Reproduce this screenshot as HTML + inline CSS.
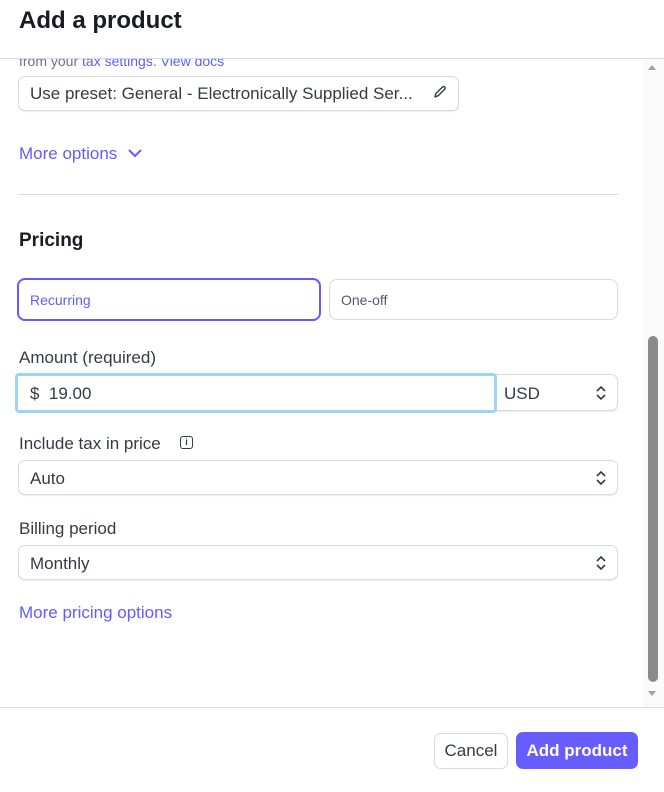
<!DOCTYPE html>
<html><head><style>
*{box-sizing:border-box;margin:0;padding:0}
body{width:664px;height:792px;overflow:hidden;background:#fff;font-family:"Liberation Sans",sans-serif;color:#353a44;position:relative}
.a{position:absolute}
.sel{position:absolute;border:1px solid #d5dbe1;border-radius:7px;background:#fff;box-shadow:0 1px 1px rgba(0,0,0,.08)}
.lbl{position:absolute;font-size:17px;color:#353a44}
.chev{position:absolute;right:12px;top:50%;margin-top:-8px}
</style></head><body>
<div class="a" style="left:19px;top:7px;font-size:24px;font-weight:bold;color:#1a1b25">Add a product</div>
<div class="a" style="left:0;top:58px;width:664px;height:1px;background:#d8dce4"></div>
<div class="a" style="left:0;top:59px;width:640px;height:648px;overflow:hidden">
  <div class="a" style="left:19px;top:-6px;font-size:14px;color:#687385">from your <span style="color:#635bff">tax settings. View docs</span></div>
</div>
<div class="sel" style="left:18px;top:76px;width:441px;height:35px"></div>
<div class="lbl" style="left:30px;top:84px;color:#353a44">Use preset: General - Electronically Supplied Ser...</div>
<svg class="a" style="left:433px;top:85px" width="14" height="14" viewBox="0 0 14 14"><path d="M2 12l1-3.5 6.5-6.5a1.5 1.5 0 0 1 2.2 2.2L5.2 10.7z" fill="none" stroke="#353a44" stroke-width="1.4" stroke-linejoin="round"/></svg>
<div class="lbl" style="left:19px;top:144px;color:#635bff">More options</div>
<svg class="a" style="left:127px;top:147px" width="16" height="12" viewBox="0 0 16 12"><path d="M2 3l6 6 6-6" fill="none" stroke="#635bff" stroke-width="2"/></svg>
<div class="a" style="left:18px;top:194px;width:600px;height:1px;background:#d8dce4"></div>
<div class="a" style="left:19px;top:230px;font-size:19px;font-weight:bold;color:#1a1b25">Pricing</div>
<div class="a" style="left:17px;top:278px;width:304px;height:43px;border:2px solid #635bff;border-radius:8px"></div>
<div class="a" style="left:30px;top:292px;font-size:14px;color:#635bff">Recurring</div>
<div class="a" style="left:329px;top:279px;width:289px;height:41px;border:1px solid #d5dbe1;border-radius:8px"></div>
<div class="a" style="left:341px;top:292px;font-size:14px;color:#545969">One-off</div>
<div class="lbl" style="left:19px;top:348px">Amount (required)</div>
<div class="sel" style="left:490px;top:374px;width:128px;height:37px"></div>
<div class="a" style="left:15px;top:373px;width:482px;height:40px;border:3px solid #9ed4f3;border-radius:4px;background:#fff"></div>
<div class="lbl" style="left:30px;top:384px">$&nbsp;&nbsp;19.00</div>
<div class="lbl" style="left:504px;top:384px">USD</div>
<svg class="a" style="left:594px;top:384px" width="14" height="18" viewBox="0 0 14 18"><path d="M3 7l4-4 4 4M3 11l4 4 4-4" fill="none" stroke="#353a44" stroke-width="1.6"/></svg>
<div class="lbl" style="left:19px;top:434px">Include tax in price</div>
<div class="a" style="left:180px;top:436px;width:13px;height:13px;border:1.5px solid #353a44;border-radius:3px;font-size:9px;font-weight:bold;text-align:center;line-height:10px">i</div>
<div class="sel" style="left:18px;top:460px;width:600px;height:35px"></div>
<div class="lbl" style="left:30px;top:469px">Auto</div>
<svg class="a" style="left:594px;top:469px" width="14" height="18" viewBox="0 0 14 18"><path d="M3 7l4-4 4 4M3 11l4 4 4-4" fill="none" stroke="#353a44" stroke-width="1.6"/></svg>
<div class="lbl" style="left:19px;top:519px">Billing period</div>
<div class="sel" style="left:18px;top:545px;width:600px;height:35px"></div>
<div class="lbl" style="left:30px;top:554px">Monthly</div>
<svg class="a" style="left:594px;top:554px" width="14" height="18" viewBox="0 0 14 18"><path d="M3 7l4-4 4 4M3 11l4 4 4-4" fill="none" stroke="#353a44" stroke-width="1.6"/></svg>
<div class="lbl" style="left:19px;top:603px;color:#635bff">More pricing options</div>
<div class="a" style="left:643px;top:59px;width:21px;height:648px;background:#fafafa"></div>
<div class="a" style="left:648px;top:65px;width:0;height:0;border-left:4px solid transparent;border-right:4px solid transparent;border-bottom:5px solid #a3a3a3"></div>
<div class="a" style="left:648px;top:336px;width:10px;height:346px;background:#8b8b8b;border-radius:5px"></div>
<div class="a" style="left:648px;top:691px;width:0;height:0;border-left:4px solid transparent;border-right:4px solid transparent;border-top:5px solid #a3a3a3"></div>
<div class="a" style="left:0;top:707px;width:664px;height:1px;background:#d8dce4"></div>
<div class="a" style="left:434px;top:733px;width:74px;height:36px;border:1px solid #d5dbe1;border-radius:7px;font-size:17px;text-align:center;line-height:34px;color:#353a44">Cancel</div>
<div class="a" style="left:516px;top:732px;width:122px;height:37px;background:#675dff;border-radius:7px;font-size:17px;font-weight:bold;color:#fff;text-align:center;line-height:37px">Add product</div>
</body></html>
